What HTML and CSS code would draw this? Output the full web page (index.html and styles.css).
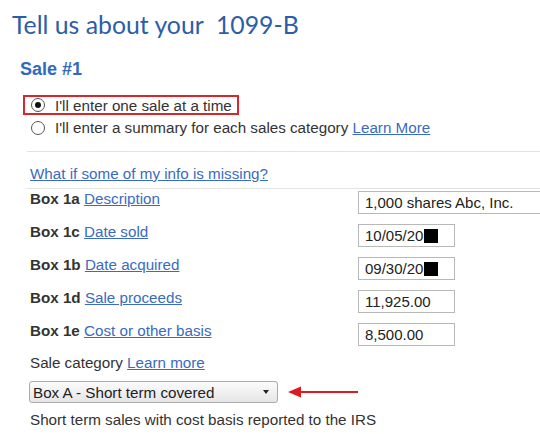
FILE: index.html
```html
<!DOCTYPE html>
<html>
<head>
<meta charset="utf-8">
<link rel="stylesheet" href="styles.css">
</head>
<body>
<div class="page">
  <h1 class="title">Tell us about your&nbsp; 1099-B</h1>
  <h2 class="sale">Sale #1</h2>
  <div class="choices">
    <div class="choice selected"><span class="radio on"></span><span>I'll enter one sale at a time</span></div>
    <div class="choice"><span class="radio"></span><span>I'll enter a summary for each sales category <a href="#">Learn More</a></span></div>
  </div>
  <hr class="rule rule-top">
  <a class="missing" href="#">What if some of my info is missing?</a>
  <hr class="rule rule-mid">
  <div class="rows">
    <div class="row"><div class="lbl"><b>Box 1a</b> <a href="#">Description</a></div><div class="field wide">1,000 shares Abc, Inc.</div></div>
    <div class="row"><div class="lbl"><b>Box 1c</b> <a href="#">Date sold</a></div><div class="field">10/05/20<span class="redact"></span></div></div>
    <div class="row"><div class="lbl"><b>Box 1b</b> <a href="#">Date acquired</a></div><div class="field">09/30/20<span class="redact"></span></div></div>
    <div class="row"><div class="lbl"><b>Box 1d</b> <a href="#">Sale proceeds</a></div><div class="field">11,925.00</div></div>
    <div class="row"><div class="lbl"><b>Box 1e</b> <a href="#">Cost or other basis</a></div><div class="field">8,500.00</div></div>
  </div>
  <div class="category">Sale category <a href="#">Learn more</a></div>
  <div class="select-line">
    <div class="select"><span>Box A - Short term covered</span><span class="caret"></span></div>
    <svg class="arrow" width="72" height="14" viewBox="0 0 72 14"><line x1="8" y1="7" x2="70" y2="7" stroke="#e0191f" stroke-width="2.2"/><polygon points="0,7 13,1.5 13,12.5" fill="#e0191f"/></svg>
  </div>
  <div class="note">Short term sales with cost basis reported to the IRS</div>
</div>
</body>
</html>
```
FILE: styles.css
```css
html, body { margin: 0; padding: 0; background: #fff; }
body { font-family: "Liberation Sans", Arial, sans-serif; color: #333; overflow: hidden; width: 540px; height: 434px; }
a { color: #3a6bc0; text-decoration: underline; }
.page { padding-top: 12px; }
.title {
  margin: 0 0 0 12px;
  font-family: "Lato", "Noto Sans", sans-serif;
  font-weight: 400;
  font-size: 24.8px;
  line-height: 26px;
  color: #2c5ea8;
}
.sale {
  margin: 20px 0 0 20px;
  font-size: 18px;
  line-height: 22px;
  font-weight: bold;
  color: #3169bf;
}
.choices { margin: 15px 0 0 23px; width: 480px; }
.choice { display: flex; align-items: center; height: 23px; font-size: 15.2px; padding-left: 8px; }
.choice.selected { border: 2px solid #d9262c; width: 206px; height: 16px; padding-left: 6px; margin-bottom: 1px; }
.radio { width: 12px; height: 12px; border: 1px solid #555; border-radius: 50%; margin-right: 10px; box-sizing: content-box; position: relative; flex: none; background: #fff; }
.radio.on::after { content: ""; position: absolute; left: 3px; top: 3px; width: 6px; height: 6px; border-radius: 50%; background: #111; }
.rule { border: 0; height: 1px; background: #e3e3e3; margin: 0 0 0 27px; }
.rule-top { margin-top: 12px; }
.missing { display: block; margin: 12px 0 0 30px; font-size: 15.2px; line-height: 20px; }
.rule-mid { margin-top: 4px; }
.rows { margin-top: 1px; }
.row { display: grid; grid-template-columns: 328px 1fr; height: 33px; padding-left: 30px; }
.row:last-child { height: 24px; }
.lbl { font-size: 15.2px; line-height: 18px; }
.lbl b { color: #333; }
.field {
  width: 97px; height: 23px; box-sizing: border-box;
  border: 1px solid #b8b8b8; font-size: 15px; line-height: 21px;
  padding-left: 6px; color: #222; display: flex; align-items: center; margin-top: 1px;
}
.field.wide { width: 200px; }
.redact { display: inline-block; width: 14px; height: 14px; background: #000; margin-left: 1px; }
.category { margin: 7px 0 0 30px; font-size: 15.2px; line-height: 20px; }
.select-line { display: flex; align-items: center; margin: 8px 0 0 29px; height: 22px; }
.select {
  width: 249px; height: 22px; box-sizing: border-box; border: 1px solid #aaa; border-radius: 3px;
  background: linear-gradient(#fbfbfb, #e6e6e6); display: flex; align-items: center; justify-content: space-between;
  padding: 0 8px 0 3px; font-size: 15.2px; color: #222;
}
.caret { width: 0; height: 0; border-left: 3.5px solid transparent; border-right: 3.5px solid transparent; border-top: 4px solid #222; }
.arrow { margin-left: 10px; }
.note { margin: 7px 0 0 30px; font-size: 15.2px; line-height: 20px; }
```
